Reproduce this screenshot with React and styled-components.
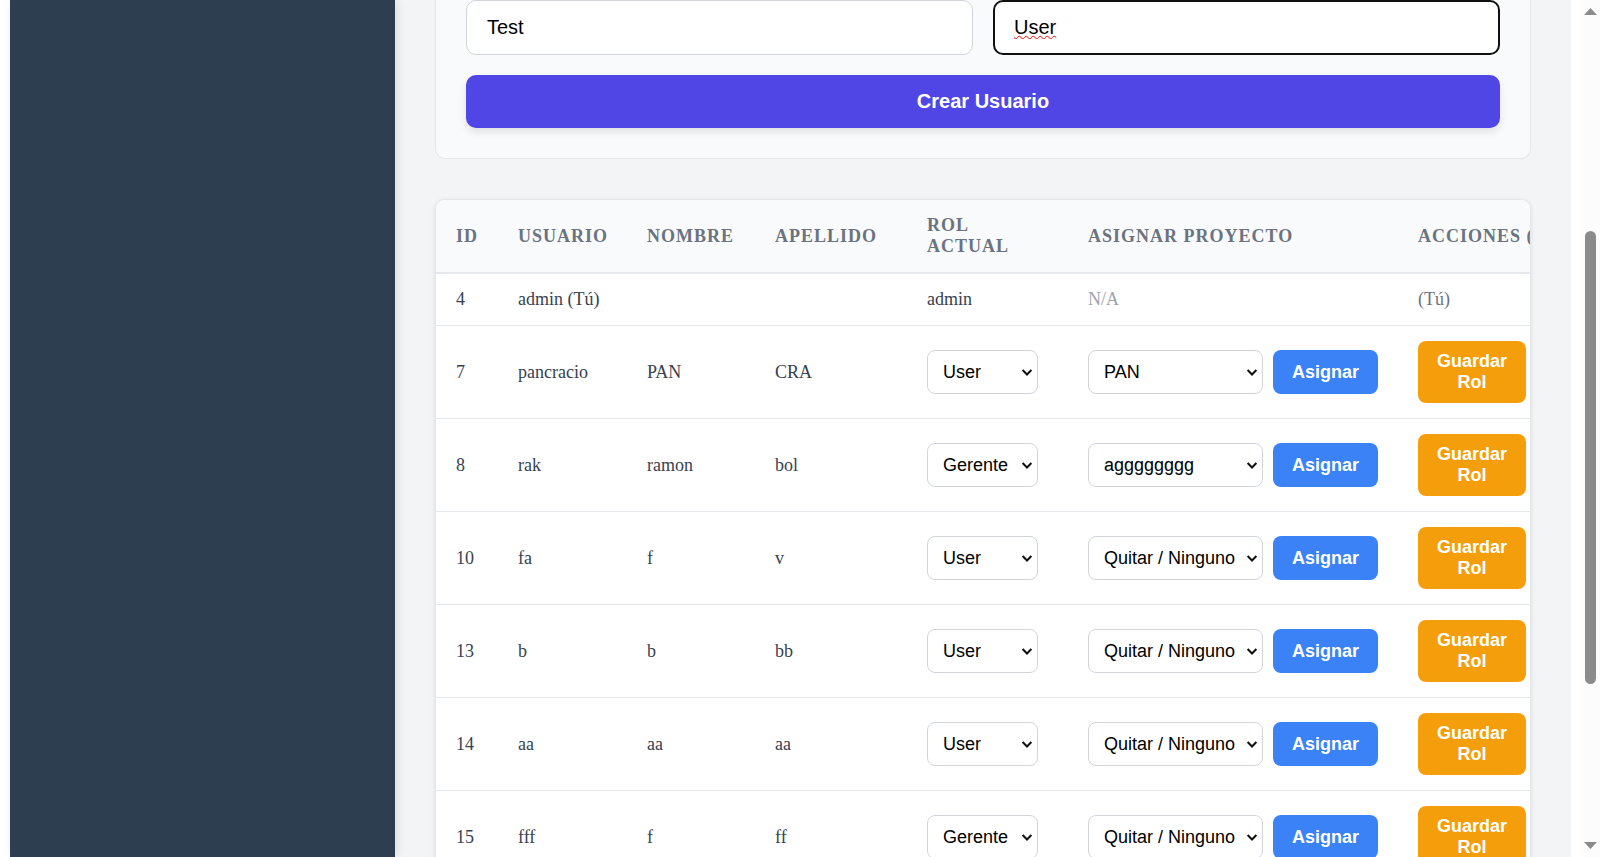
import React, { useState } from "react";
import styled, { createGlobalStyle } from "styled-components";

const GlobalStyle = createGlobalStyle`
  * { box-sizing: border-box; }
  body {
    margin: 0;
    background: #fff;
    font-family: "Liberation Serif", "Times New Roman", serif;
    font-size: 18px;
    line-height: 21px;
    color: #374151;
  }
`;

const Window = styled.div`
  display: flex;
  height: 100vh;
  overflow: hidden;
`;

const Page = styled.div`
  display: flex;
  flex: 1;
  min-width: 0;
  margin: 0 10px;
  background: #f3f4f6;
`;

const Sidebar = styled.aside`
  flex: 0 0 385px;
  background: #2c3e50;
  box-shadow: 2px 0 10px rgba(0, 0, 0, 0.1);
`;

const Main = styled.main`
  flex: 1;
  min-width: 0;
  padding: 0 40px;
`;

const FormCard = styled.form`
  display: grid;
  grid-template-columns: 1fr 1fr;
  gap: 20px;
  margin-bottom: 40px;
  padding: 0 30px 30px;
  background: #f9fafb;
  border: 1px solid #e5e7eb;
  border-top: 0;
  border-radius: 0 0 10px 10px;
`;

const TextField = styled.input`
  width: 100%;
  height: 55px;
  padding: 0 ${(p) => (p.$active ? 19 : 20)}px;
  border: ${(p) => (p.$active ? "2px solid #101010" : "1px solid #d1d5db")};
  border-radius: 10px;
  background: #fff;
  color: #000;
  font: 20px "Liberation Sans", Arial, sans-serif;
  text-decoration: ${(p) => (p.$active ? "underline wavy #f00 1px" : "none")};
  text-decoration-skip-ink: none;
  outline: none;
`;

const SubmitButton = styled.button`
  grid-column: 1 / -1;
  height: 53px;
  border: 0;
  border-radius: 10px;
  background: #4f46e5;
  color: #fff;
  font: bold 20px "Liberation Sans", Arial, sans-serif;
  box-shadow: 0 4px 8px rgba(0, 0, 0, 0.1);
  cursor: pointer;
`;

const TableCard = styled.div`
  overflow: hidden;
  background: #fff;
  border: 1px solid #e5e7eb;
  border-radius: 10px;
  box-shadow: 0 1px 4px rgba(0, 0, 0, 0.1);
`;

const Table = styled.table`
  width: 1170px;
  table-layout: fixed;
  border-collapse: separate;
  border-spacing: 0;
`;

const Column = styled.col`
  width: ${(p) => p.$width}px;
`;

const HeadCell = styled.th`
  padding: 15px 20px;
  background: #f9fafb;
  border-bottom: 2px solid #e5e7eb;
  color: #6b7280;
  font-weight: bold;
  text-align: left;
  text-transform: uppercase;
  letter-spacing: 1px;
`;

const Cell = styled.td`
  padding: 15px 20px;
  border-bottom: 1px solid #e5e7eb;
  vertical-align: middle;
`;

const Muted = styled.span`
  color: ${(p) => (p.$light ? "#9ca3af" : "#6b7280")};
`;

const AssignGroup = styled.div`
  display: flex;
  align-items: center;
  gap: 10px;
`;

const SelectBox = styled.div`
  position: relative;
  width: ${(p) => p.$width}px;

  svg {
    position: absolute;
    right: 5px;
    top: 18px;
    pointer-events: none;
  }
`;

const Select = styled.select`
  display: block;
  width: 100%;
  height: 44px;
  padding: 0 15px;
  appearance: none;
  border: 1px solid #d1d5db;
  border-radius: 8px;
  background: #fff;
  color: #000;
  font: 18px "Liberation Sans", Arial, sans-serif;
`;

const ActionButton = styled.button`
  padding: 10px 0;
  border: 0;
  border-radius: 8px;
  color: #fff;
  font: bold 18px/21px "Liberation Sans", Arial, sans-serif;
  cursor: pointer;
`;

const AssignButton = styled(ActionButton)`
  width: 105px;
  height: 44px;
  background: #3b82f6;
`;

const SaveButton = styled(ActionButton)`
  display: block;
  width: 108px;
  padding: 10px 18px;
  background: #f59e0b;
`;

const Scrollbar = styled.div`
  display: flex;
  flex: 0 0 19px;
  flex-direction: column;
  align-items: center;
  justify-content: space-between;
  padding: 8px 0;
  background: #fcfcfc;
`;

const Track = styled.div`
  display: flex;
  flex: 1;
  flex-direction: column;
`;

const Gap = styled.div`
  flex: ${(p) => p.$share};
`;

const Thumb = styled.div`
  flex: 453;
  width: 11px;
  border-radius: 6px;
  background: #8b8b8b;
`;

const columns = [
  ["ID", 62],
  ["Usuario", 129],
  ["Nombre", 128],
  ["Apellido", 152],
  ["Rol Actual", 161],
  ["Asignar Proyecto", 330],
  ["Acciones (Rol)", 208],
];

const roles = ["User", "Gerente"];
const projects = ["Quitar / Ninguno", "PAN", "agggggggg"];

const users = [
  { id: 7, user: "pancracio", name: "PAN", surname: "CRA", role: "User", project: "PAN" },
  { id: 8, user: "rak", name: "ramon", surname: "bol", role: "Gerente", project: "agggggggg" },
  { id: 10, user: "fa", name: "f", surname: "v", role: "User", project: "Quitar / Ninguno" },
  { id: 13, user: "b", name: "b", surname: "bb", role: "User", project: "Quitar / Ninguno" },
  { id: 14, user: "aa", name: "aa", surname: "aa", role: "User", project: "Quitar / Ninguno" },
  { id: 15, user: "fff", name: "f", surname: "ff", role: "Gerente", project: "Quitar / Ninguno" },
];

function Dropdown({ label, width, options, initial }) {
  const [value, setValue] = useState(initial);
  return (
    <SelectBox $width={width}>
      <Select aria-label={label} value={value} onChange={(e) => setValue(e.target.value)}>
        {options.map((o) => (
          <option key={o}>{o}</option>
        ))}
      </Select>
      <svg width="12" height="9" viewBox="0 0 12 9" aria-hidden="true">
        <path d="M1.6 2 L6 6.5 L10.4 2" fill="none" stroke="#101010" strokeWidth="2" />
      </svg>
    </SelectBox>
  );
}

function UserRow({ row }) {
  return (
    <tr>
      <Cell>{row.id}</Cell>
      <Cell>{row.user}</Cell>
      <Cell>{row.name}</Cell>
      <Cell>{row.surname}</Cell>
      <Cell>
        <Dropdown label={`Rol de ${row.user}`} width={111} options={roles} initial={row.role} />
      </Cell>
      <Cell>
        <AssignGroup>
          <Dropdown
            label={`Proyecto de ${row.user}`}
            width={175}
            options={projects}
            initial={row.project}
          />
          <AssignButton type="button">Asignar</AssignButton>
        </AssignGroup>
      </Cell>
      <Cell>
        <SaveButton type="button">Guardar Rol</SaveButton>
      </Cell>
    </tr>
  );
}

export default function App() {
  return (
    <>
      <GlobalStyle />
      <Window>
        <Page>
          <Sidebar />
          <Main>
            <FormCard onSubmit={(e) => e.preventDefault()}>
              <TextField aria-label="Nombre" defaultValue="Test" />
              <TextField aria-label="Apellido" defaultValue="User" $active />
              <SubmitButton type="submit">Crear Usuario</SubmitButton>
            </FormCard>
            <TableCard>
              <Table>
                <colgroup>
                  {columns.map(([title, width]) => (
                    <Column key={title} $width={width} />
                  ))}
                </colgroup>
                <thead>
                  <tr>
                    {columns.map(([title]) => (
                      <HeadCell key={title} scope="col">{title}</HeadCell>
                    ))}
                  </tr>
                </thead>
                <tbody>
                  <tr>
                    <Cell>4</Cell>
                    <Cell>admin (Tú)</Cell>
                    <Cell />
                    <Cell />
                    <Cell>admin</Cell>
                    <Cell><Muted $light>N/A</Muted></Cell>
                    <Cell><Muted>(Tú)</Muted></Cell>
                  </tr>
                  {users.map((row) => (
                    <UserRow key={row.id} row={row} />
                  ))}
                </tbody>
              </Table>
            </TableCard>
          </Main>
        </Page>
        <Scrollbar aria-hidden="true">
          <svg width="13" height="7"><path d="M6.5 0 L13 7 H0 Z" fill="#8b8b8b" /></svg>
          <Track>
            <Gap $share={216} />
            <Thumb />
            <Gap $share={158} />
          </Track>
          <svg width="13" height="7"><path d="M0 0 H13 L6.5 7 Z" fill="#8b8b8b" /></svg>
        </Scrollbar>
      </Window>
    </>
  );
}
